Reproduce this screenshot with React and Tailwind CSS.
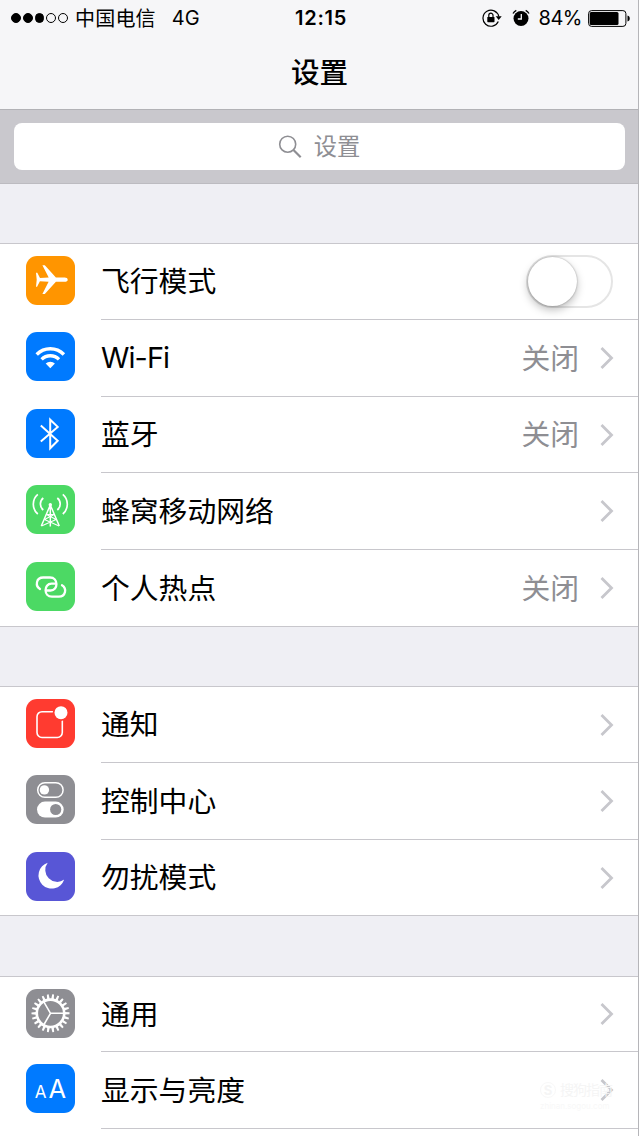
const svgProps = {
  viewBox: "0 0 49 49",
  fill: "none",
  className: "w-full h-full",
};

const PlaneIcon = () => (
  <svg {...svgProps}>
    <path
      fill="#fff"
      d="M41.7 23.700c0 1.400-1.300 2.100-3 2.100h-8.800L18.800 38h-2.400l6.200-12.200-8.700-.5-2.800 5.400H10l.7-7L10 16.800h1.300l2.700 5.300 8.700-.5L16.400 9.300h2.400l11.100 12.300h8.800c1.700 0 3 .7 3 2.100z"
    />
  </svg>
);

const WifiIcon = () => (
  <svg {...svgProps}>
    <path d="M10.700 22.400a19.200 19.200 0 0 1 27.200 0" stroke="#fff" strokeWidth="3.500" />
    <path d="M15.600 27.400a12.300 12.300 0 0 1 17.400 0" stroke="#fff" strokeWidth="3.400" />
    <path d="M24.300 36.200l-4.600-4.600a6.500 6.500 0 0 1 9.200 0z" fill="#fff" />
  </svg>
);

const BluetoothIcon = () => (
  <svg {...svgProps}>
    <path
      d="M14.800 16.600L31.700 31.700 24.200 39.300V10.700l7.500 7.200L14.800 32.600"
      stroke="#fff"
      strokeWidth="2"
    />
  </svg>
);

const CellularIcon = () => (
  <svg {...svgProps} stroke="#fff">
    <path
      d="M11.800 9.300c-6 5-6 14.700 0 19.700M17.300 13c-3.900 3-3.900 9 0 12M36.800 9.300c6 5 6 14.700 0 19.700M31.300 13c3.900 3 3.900 9 0 12"
      strokeWidth="1.700"
    />
    <path d="M24.300 20L15.300 41M24.300 20l9 21M24.300 19v22.500" strokeWidth="1.500" />
    <path d="M20.500 29.500h7.600M20.500 29.500l9.600 5M28.100 29.500l-9.600 5M18.500 34.500l14.500 6.500M30.100 34.500L15.500 41" strokeWidth="1.100" />
    <circle cx="24.300" cy="19.700" r="1.700" fill="#fff" stroke="none" />
  </svg>
);

// two identical open links, the second one turned by 180 degrees
const HotspotIcon = () => (
  <svg {...svgProps} stroke="#fff" strokeWidth="2.300" strokeLinecap="round">
    <path d="M14 27C9 24 10 15.500 17.200 15.500h6.800c8.500 0 8.500 13 .5 13h-4" />
    <path
      d="M14 27C9 24 10 15.500 17.200 15.500h6.800c8.500 0 8.500 13 .5 13h-4"
      transform="rotate(180 25 25.100)"
    />
  </svg>
);

const NotificationIcon = () => (
  <svg {...svgProps}>
    <rect x="11" y="12.700" width="25.300" height="25.800" rx="5" stroke="#fff" strokeWidth="1.600" />
    <circle cx="35" cy="13.700" r="8.200" fill="#ff3b30" />
    <circle cx="35" cy="13.700" r="6.500" fill="#fff" />
  </svg>
);

const ControlIcon = () => (
  <svg {...svgProps}>
    <rect x="11.700" y="7.700" width="25.400" height="14.600" rx="7.300" stroke="#fff" strokeWidth="1.500" />
    <circle cx="18.400" cy="14.900" r="4.700" fill="#fff" />
    <rect x="11" y="26.600" width="26.700" height="16" rx="8" fill="#fff" />
    <circle cx="29.700" cy="34.500" r="5.600" fill="#8e8e93" />
  </svg>
);

const MoonIcon = () => (
  <svg {...svgProps}>
    <path d="M21.700 10.800A13.200 13.200 0 1 0 38.200 27.600 11.900 11.900 0 0 1 21.700 10.800z" fill="#fff" />
  </svg>
);

const teeth = Array.from({ length: 22 }, (_, i) => (i * 360) / 22);

const GearIcon = () => (
  <svg {...svgProps} stroke="#fff">
    <circle cx="24.500" cy="24.300" r="13.700" strokeWidth="2.600" />
    {teeth.map((deg) => (
      <path
        key={deg}
        d="M23.200 10L23.600 5.300h1.800l.4 4.700z"
        fill="#fff"
        stroke="none"
        transform={`rotate(${deg + 8} 24.500 24.300)`}
      />
    ))}
    <path d="M24.500 24.300H38M24.500 24.300L17.700 12.600M24.500 24.300L17.700 36" strokeWidth="1.600" />
  </svg>
);

const DisplayIcon = () => (
  <div className="flex items-baseline justify-center gap-[2px] h-full pt-[9px] text-white leading-[31px]">
    <span className="text-[17px]">A</span>
    <span className="text-[25.500px]">A</span>
  </div>
);

const groups = [
  [
    { label: "飞行模式", icon: PlaneIcon, color: "bg-[#ff9500]", height: "h-[76px]", toggle: true },
    { label: "Wi-Fi", icon: WifiIcon, color: "bg-[#007aff]", height: "h-[77px]", value: "关闭" },
    { label: "蓝牙", icon: BluetoothIcon, color: "bg-[#007aff]", height: "h-[76px]", value: "关闭" },
    { label: "蜂窝移动网络", icon: CellularIcon, color: "bg-[#4cd964]", height: "h-[77px]" },
    { label: "个人热点", icon: HotspotIcon, color: "bg-[#4cd964]", height: "h-[77px]", value: "关闭" },
  ],
  [
    { label: "通知", icon: NotificationIcon, color: "bg-[#ff3b30]", height: "h-[76px]" },
    { label: "控制中心", icon: ControlIcon, color: "bg-[#8e8e93]", height: "h-[77px]" },
    { label: "勿扰模式", icon: MoonIcon, color: "bg-[#5856d6]", height: "h-[76px]" },
  ],
  [
    { label: "通用", icon: GearIcon, color: "bg-[#8e8e93]", height: "h-[75px]" },
    { label: "显示与亮度", icon: DisplayIcon, color: "bg-[#007aff]", height: "h-[77px]" },
    { height: "h-[76px]" },
  ],
];

function Toggle() {
  return (
    <div className="flex items-center w-[87px] h-[53px] mr-px rounded-full border-2 border-[#e5e5e5] bg-white">
      <div className="w-[49px] h-[49px] rounded-full bg-white shadow-[0_4px_8px_rgba(0,0,0,0.25),0_0_2px_rgba(0,0,0,0.35)]" />
    </div>
  );
}

function Chevron() {
  return (
    <svg viewBox="0 0 14 24" fill="none" className="w-[14px] h-6">
      <path d="M1.500 2l10 10-10 10" stroke="#c7c7cc" strokeWidth="2.800" />
    </svg>
  );
}

function Row({ label, icon: Icon, color, height, value, toggle, last }) {
  return (
    <div className={`flex pl-[26px] ${height} ${last ? "border-b border-[#c8c7cc]" : ""}`}>
      <div className={`w-[49px] h-[49px] mt-3 rounded-[11px] shrink-0 overflow-hidden ${color || ""}`}>
        {Icon && <Icon />}
      </div>
      <div
        className={`flex flex-1 items-center ml-[26px] pr-[25px] ${last ? "" : "border-b border-[#c8c7cc]"}`}>
        <span
          className={`flex-1 text-[28.800px] leading-10 text-black ${label === "Wi-Fi" ? "tracking-[-0.9px]" : "pt-px"}`}>
          {label}
        </span>
        {value && <span className="mr-[21px] pt-px text-[28.800px] leading-10 text-[#8e8e93]">{value}</span>}
        {toggle && <Toggle />}
        {label && !toggle && <Chevron />}
      </div>
    </div>
  );
}

function StatusBar() {
  return (
    <div className="grid grid-cols-3 items-center h-9 text-[20px] leading-9">
      <div className="flex items-center pl-[11px]">
        <div className="flex gap-[2px]">
          {[1, 2, 3, 4, 5].map((n) => (
            <span
              key={n}
              className={`w-[9.800px] h-[9.800px] rounded-full border border-black ${n <= 3 ? "bg-black" : ""}`}
            />
          ))}
        </div>
        <span className="ml-[7px] pt-[2px] leading-[34px] tracking-[0.2px]">中国电信</span>
        <span className="ml-[16px]">4G</span>
      </div>
      <span className="text-center font-semibold tracking-[0.7px] pl-[3px]">12:15</span>
      <div className="flex items-center justify-end pr-2">
        <svg viewBox="0 0 20 18" fill="none" className="w-5 h-[18px] mr-[10px]">
          <path d="M16.300 12.500A8 8 0 1 1 16.800 7.500" stroke="#000" strokeWidth="1.200" />
          <path d="M13.700 7.300h6l-3 3.600z" fill="#000" />
          <rect x="5.300" y="8" width="7.200" height="5.200" rx=".6" fill="#000" />
          <path d="M6.800 8.200V6.300a2.100 2.100 0 0 1 4.200 0v1.900" stroke="#000" strokeWidth="1.200" />
        </svg>
        <svg viewBox="0 0 18 18" fill="none" className="w-[18px] h-[18px] mr-[9px]">
          <circle cx="9" cy="9.500" r="7.500" fill="#000" />
          <path d="M1 4.500A8 8 0 0 1 4.300 1.300M13.700 1.300A8 8 0 0 1 17 4.500" stroke="#000" strokeWidth="1.300" />
          <path d="M9.300 5v5H5.800" stroke="#f7f7f9" strokeWidth="1.300" />
        </svg>
        <span className="mr-[6px] tracking-[-0.5px]">84%</span>
        <svg viewBox="0 0 43 17" fill="none" className="w-[43px] h-[17px]">
          <rect x=".6" y=".6" width="37.300" height="15.800" rx="3" stroke="#000" strokeWidth="1" />
          <rect x="1.700" y="1.900" width="28.800" height="13.200" rx="1.500" fill="#000" />
          <path d="M39.500 5.500c3 .6 3 5.400 0 6z" fill="#000" />
        </svg>
      </div>
    </div>
  );
}

function Watermark() {
  return (
    <div className="absolute right-[23px] bottom-[23px] w-[76px] text-[#f5f5f5]">
      <div className="flex items-center gap-1 text-[14px] leading-[18px]">
        <span className="flex items-center justify-center w-4 h-4 rounded-full border border-[#f8f8f8] text-[13px] font-bold">
          S
        </span>
        <span className="tracking-[-1px]">搜狗指南</span>
      </div>
      <div className="text-[8px] leading-[14px] text-[#f8f8f8]">zhinan.sogou.com</div>
    </div>
  );
}

export default function App() {
  return (
    <div className="relative w-[639px] h-[1136px] overflow-hidden bg-[#efeff4] text-black font-[Inter,'Noto_Sans_CJK_SC',sans-serif]">
      <header className="h-[110px] bg-[#f6f6f8] border-b border-[#b2b2b6]">
        <StatusBar />
        <h1 className="text-center text-[28.500px] font-medium leading-[74px]">设置</h1>
      </header>

      <div className="h-[74px] px-[14px] pt-[13px] bg-[#c9c8cd] border-b border-[#bcbbc0]">
        <div className="flex items-center justify-center gap-[12px] h-[47px] pr-px rounded-[8px] bg-white text-[#8e8e93]">
          <svg viewBox="0 0 24 24" fill="none" className="w-6 h-6">
            <circle cx="9.700" cy="9.200" r="8" stroke="#8e8e93" strokeWidth="1.600" />
            <path d="M15.500 15l7.200 7.200" stroke="#8e8e93" strokeWidth="2.200" />
          </svg>
          <span className="text-[23.300px] leading-8">设置</span>
        </div>
      </div>

      <main>
        {groups.map((rows, i) => (
          <section
            key={i}
            className={`border-t border-[#c8c7cc] bg-white ${i === 2 ? "mt-[60px]" : "mt-[59px]"}`}>
            {rows.map((row, j) => (
              <Row key={j} {...row} last={j === rows.length - 1} />
            ))}
          </section>
        ))}
      </main>

      <Watermark />
      <div className="absolute right-0 top-0 w-px h-full bg-[#b5b5b9]" />
    </div>
  );
}
